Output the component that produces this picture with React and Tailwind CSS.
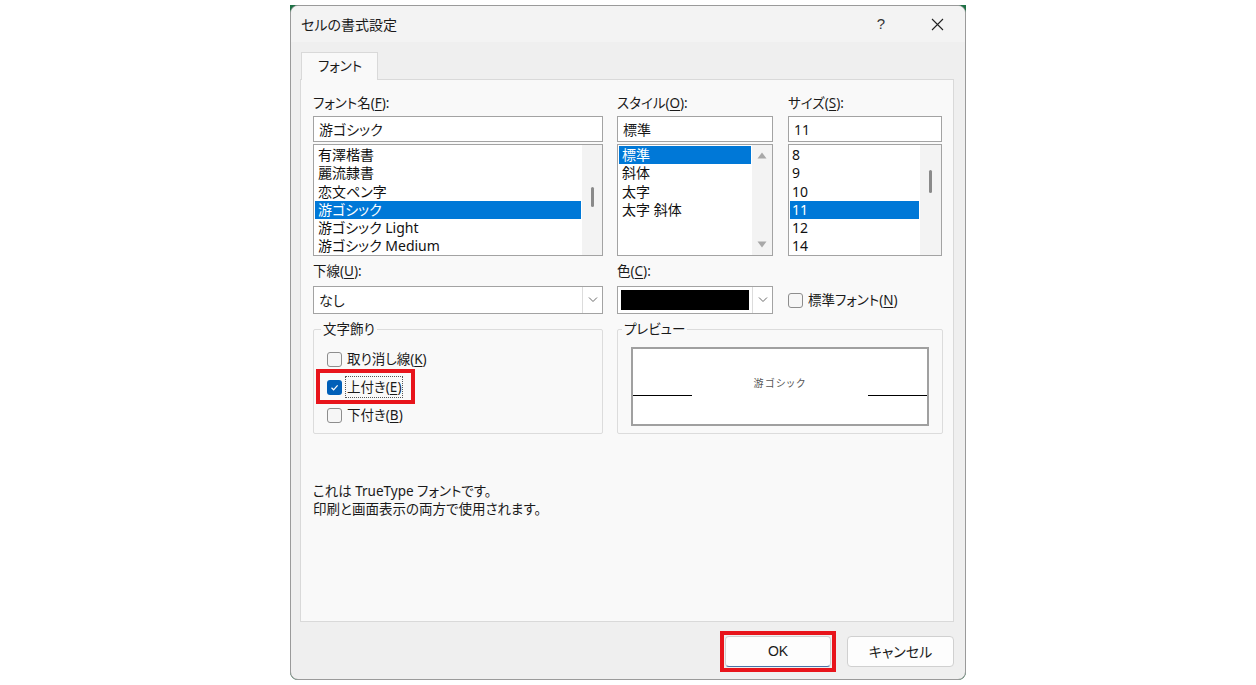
import React from 'react';

const ui = "font-['Noto_Sans','Noto_Sans_CJK_JP',sans-serif] [font-feature-settings:'palt']";

function U({ children }) {
  return <span className="underline underline-offset-[2px] decoration-1">{children}</span>;
}

function Chevron() {
  return (
    <svg width="10" height="6" viewBox="0 0 10 6" fill="none">
      <polyline points="1,0.5 5,4.5 9,0.5" stroke="#6b6b6b" strokeWidth="1" />
    </svg>
  );
}

function Checkbox({ checked }) {
  if (checked) {
    return (
      <div className="w-[15px] h-[15px] rounded-[3px] bg-[#005fb8] flex items-center justify-center shrink-0">
        <svg width="11" height="11" viewBox="0 0 11 11" fill="none">
          <polyline points="2.5,5.8 4.6,7.8 8.6,3.4" stroke="#ffffff" strokeWidth="1.2" />
        </svg>
      </div>
    );
  }
  return <div className="w-[15px] h-[15px] rounded-[3px] border border-[#8d8d8d] bg-[#f6f6f6] shrink-0" />;
}

function ListBox({ items, selected, scroll, itemPad = 'pl-[3px]' }) {
  return (
    <div className="h-[112px] border border-[#a3a3a3] bg-white flex">
      <div className="flex-1 p-px">
        {items.map((item, i) => (
          <div
            key={item}
            className={`h-[18.3px] leading-[18px] text-[14px] whitespace-nowrap ${itemPad} ${
              i === selected ? 'bg-[#0078d7] text-white' : 'text-[#111]'
            }`}
          >
            {item}
          </div>
        ))}
      </div>
      {scroll}
    </div>
  );
}

export default function App() {
  const fonts = ['有澤楷書', '麗流隷書', '恋文ペン字', '游ゴシック', '游ゴシック Light', '游ゴシック Medium'];
  const styles = ['標準', '斜体', '太字', '太字 斜体'];
  const sizes = ['8', '9', '10', '11', '12', '14'];

  return (
    <div className={`w-[1256px] h-[685px] bg-white flex justify-center pt-[5px] ${ui} text-[#1a1a1a]`}>
      <div className="w-[676px] h-[675px] bg-[#1e7145] rounded-b-[8px]">
        <div className="h-full border border-[#9a9a9a] rounded-[8px] overflow-hidden flex flex-col bg-[#efefef]">
          {/* Title bar */}
          <div className="h-[36px] bg-[#f3f3f3] flex items-center pl-[10px] pr-[21px]">
            <div className="text-[14px] leading-[18px] mt-[1px]">セルの書式設定</div>
            <div className="ml-auto text-[15px] text-[#333] mr-[46px] font-['Liberation_Sans',sans-serif]">?</div>
            <svg width="13" height="13" viewBox="0 0 13 13" fill="none">
              <path d="M1 1 L12 12 M12 1 L1 12" stroke="#222" strokeWidth="1.1" />
            </svg>
          </div>

          {/* Body */}
          <div className="flex-1 flex flex-col pl-[9px] pr-[11px] pt-[10px]">
            <div className="flex">
              <div className="ml-px w-[77px] h-[28px] border border-b-0 border-[#d9d9d9] bg-[#f9f9f9] -mb-px relative z-10 pl-[16px] flex items-center text-[13.5px]">
                フォント
              </div>
            </div>

            {/* Panel */}
            <div className="h-[543px] border border-[#d9d9d9] bg-[#f9f9f9] pl-[12px] pt-[14px]">
              <div className="flex">
                {/* Column 1 */}
                <div className="w-[290px]">
                  <div className="h-[22px] leading-[18px] text-[13.5px]">
                    フォント名(<U>F</U>):
                  </div>
                  <div className="h-[26px] border border-[#a3a3a3] bg-white pl-[5px] flex items-center text-[14px]">游ゴシック</div>
                  <div className="mt-[2px]">
                    <ListBox
                      items={fonts}
                      selected={3}
                      itemPad="pl-[3px]"
                      scroll={
                        <div className="w-[20px] bg-[#f3f3f3] flex justify-center pt-[42px]">
                          <div className="w-[3px] h-[20px] rounded-full bg-[#8a8a8a]" />
                        </div>
                      }
                    />
                  </div>
                  <div className="h-[30px] flex items-center text-[13.5px]">
                    下線(<U>U</U>):
                  </div>
                  <div className="h-[28px] border border-[#a3a3a3] bg-white flex">
                    <div className="flex-1 pl-[5px] flex items-center text-[14px]">なし</div>
                    <div className="w-[20px] border-l border-[#dcdcdc] flex items-center justify-center">
                      <Chevron />
                    </div>
                  </div>
                </div>

                {/* Column 2 */}
                <div className="w-[156px] ml-[14px]">
                  <div className="h-[22px] leading-[18px] text-[13.5px]">
                    スタイル(<U>O</U>):
                  </div>
                  <div className="h-[26px] border border-[#a3a3a3] bg-white pl-[5px] flex items-center text-[14px]">標準</div>
                  <div className="mt-[2px]">
                    <ListBox
                      items={styles}
                      selected={0}
                      itemPad="pl-[3px]"
                      scroll={
                        <div className="w-[20px] bg-[#f3f3f3] flex flex-col items-center justify-between py-[7px]">
                          <svg width="10" height="7" viewBox="0 0 10 7">
                            <polygon points="5,0.5 9.5,6.5 0.5,6.5" fill="#a8a8a8" />
                          </svg>
                          <svg width="10" height="7" viewBox="0 0 10 7">
                            <polygon points="0.5,0.5 9.5,0.5 5,6.5" fill="#a8a8a8" />
                          </svg>
                        </div>
                      }
                    />
                  </div>
                  <div className="h-[30px] flex items-center text-[13.5px]">
                    色(<U>C</U>):
                  </div>
                  <div className="h-[28px] border border-[#a3a3a3] bg-white flex">
                    <div className="flex-1 p-[3px]">
                      <div className="h-full bg-black" />
                    </div>
                    <div className="w-[20px] border-l border-[#dcdcdc] flex items-center justify-center">
                      <Chevron />
                    </div>
                  </div>
                </div>

                {/* Column 3 */}
                <div className="w-[154px] ml-[15px]">
                  <div className="h-[22px] leading-[18px] text-[13.5px]">
                    サイズ(<U>S</U>):
                  </div>
                  <div className="h-[26px] border border-[#a3a3a3] bg-white pl-[5px] flex items-center text-[14px]">11</div>
                  <div className="mt-[2px]">
                    <ListBox
                      items={sizes}
                      selected={3}
                      itemPad="pl-[2px]"
                      scroll={
                        <div className="w-[21px] bg-[#f3f3f3] flex justify-center pt-[25px]">
                          <div className="w-[3px] h-[23px] rounded-full bg-[#8a8a8a]" />
                        </div>
                      }
                    />
                  </div>
                  <div className="h-[30px]" />
                  <div className="h-[28px] flex items-center gap-[5px]">
                    <Checkbox />
                    <span className="text-[13.5px]">
                      標準フォント(<U>N</U>)
                    </span>
                  </div>
                </div>
              </div>

              {/* Groups */}
              <div className="flex mt-[6px]">
                <fieldset className="w-[290px] h-[114px] border border-[#dcdcdc] rounded-[2px] pl-[13px]">
                  <legend className="ml-[-6px] px-[2px] text-[13.5px] leading-[18px]">文字飾り</legend>
                  <div className="mt-[7px] flex flex-col">
                    <div className="h-[28px] flex items-center gap-[5px]">
                      <Checkbox />
                      <span className="text-[13.5px]">
                        取り消し線(<U>K</U>)
                      </span>
                    </div>
                    <div className="h-[28px] flex items-center">
                      <div className="relative flex items-center gap-[3px]">
                        <Checkbox checked />
                        <span className="text-[13.5px] border border-dotted border-[#555] px-[1px] leading-[20px]">
                          上付き(<U>E</U>)
                        </span>
                        <div className="absolute -left-[11px] -top-[7px] -bottom-[6px] -right-[12px] border-[4px] border-[#e8141b]" />
                      </div>
                    </div>
                    <div className="h-[28px] flex items-center gap-[5px]">
                      <Checkbox />
                      <span className="text-[13.5px]">
                        下付き(<U>B</U>)
                      </span>
                    </div>
                  </div>
                </fieldset>

                <fieldset className="w-[326px] h-[114px] ml-[14px] border border-[#dcdcdc] rounded-[2px] px-[13px]">
                  <legend className="ml-[-9px] px-[2px] text-[13.5px] leading-[18px]">プレビュー</legend>
                  <div className="mt-[9px] h-[79px] border-2 border-[#a0a0a0] bg-white flex items-start">
                    <div className="w-[59px] h-[47px] border-b border-black" />
                    <div className="flex-1 pt-[27px] text-center text-[10px] leading-[14px] tracking-[1.5px] text-[#555]">
                      游ゴシック
                    </div>
                    <div className="w-[59px] h-[47px] border-b border-black" />
                  </div>
                </fieldset>
              </div>

              <div className="mt-[48px] text-[13.5px] leading-[18px]">
                <div>これは TrueType フォントです。</div>
                <div>印刷と画面表示の両方で使用されます。</div>
              </div>
            </div>

            {/* Buttons */}
            <div className="flex justify-end gap-[16px] mt-[14px]">
              <div className="relative">
                <button className="w-[106px] h-[31px] rounded-[4px] bg-[#fdfdfd] border border-[#d0d0d0] border-b-[#4a73a8] text-[14px] font-['Liberation_Sans','Noto_Sans_CJK_JP',sans-serif]">
                  OK
                </button>
                <div className="absolute -left-[5px] -top-[5px] -right-[5px] -bottom-[5px] border-[4px] border-[#e8141b]" />
              </div>
              <button className="w-[107px] h-[31px] rounded-[4px] bg-[#fdfdfd] border border-[#d0d0d0] text-[14px]">
                キャンセル
              </button>
            </div>
          </div>
        </div>
      </div>
    </div>
  );
}
